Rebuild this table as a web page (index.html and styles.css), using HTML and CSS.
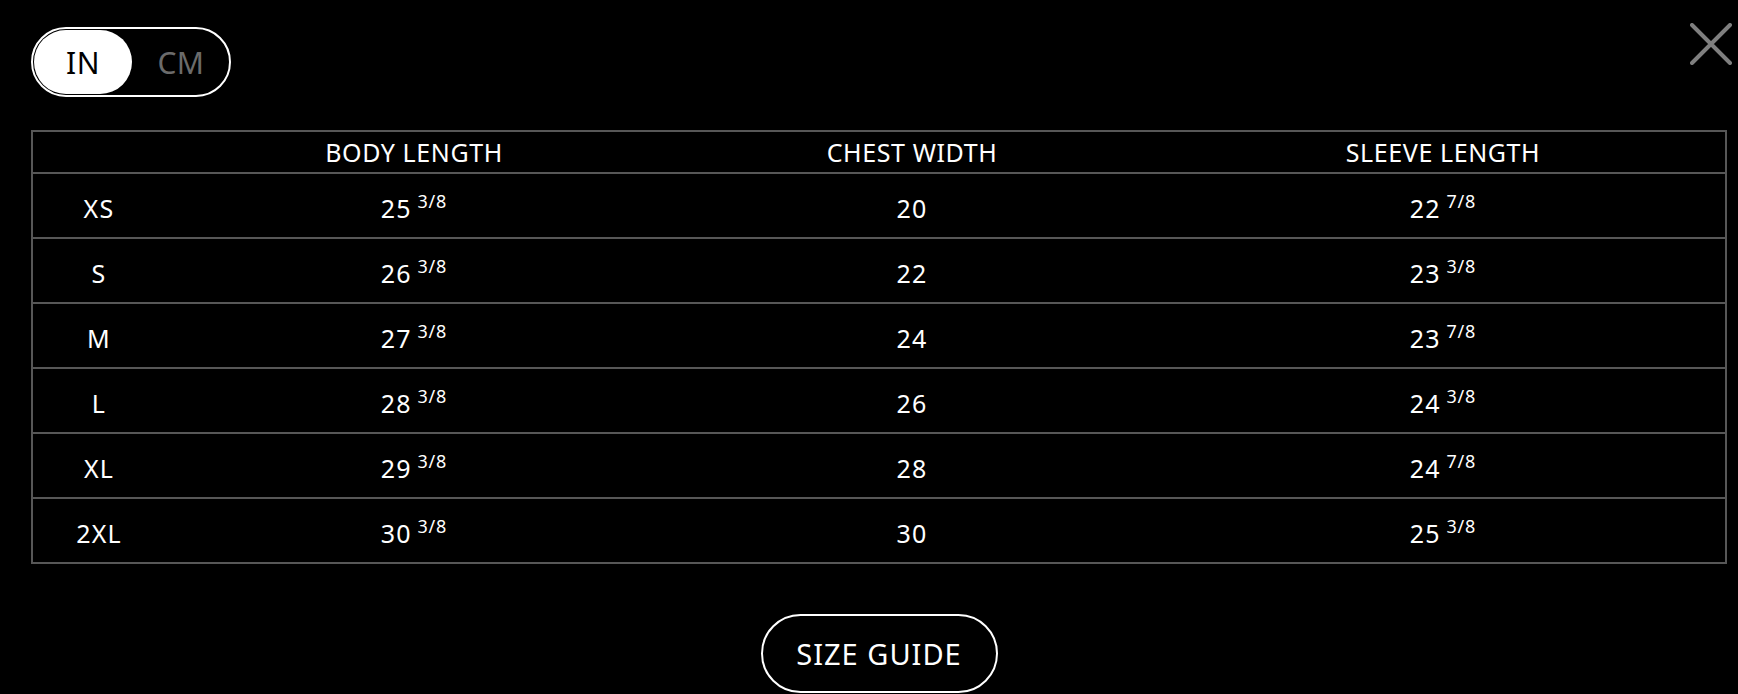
FILE: index.html
```html
<!DOCTYPE html>
<html>
<head>
<meta charset="utf-8">
<link rel="stylesheet" href="styles.css">
</head>
<body>
<div class="modal">
  <div class="topbar">
    <div class="toggle">
      <span class="opt active">IN</span>
      <span class="opt">CM</span>
    </div>
    <button class="close" aria-label="Close">
      <svg width="42" height="42" viewBox="0 0 42 42"><path d="M2 2 L40 40 M40 2 L2 40" stroke="#7f7f7f" stroke-width="4" stroke-linecap="round" fill="none"/></svg>
    </button>
  </div>
  <table class="sizes">
    <colgroup><col class="c0"><col class="c1"><col class="c2"><col class="c3"></colgroup>
    <thead>
      <tr><th></th><th>BODY LENGTH</th><th>CHEST WIDTH</th><th>SLEEVE LENGTH</th></tr>
    </thead>
    <tbody>
      <tr><td>XS</td><td>25 <sup>3/8</sup></td><td>20</td><td>22 <sup>7/8</sup></td></tr>
      <tr><td>S</td><td>26 <sup>3/8</sup></td><td>22</td><td>23 <sup>3/8</sup></td></tr>
      <tr><td>M</td><td>27 <sup>3/8</sup></td><td>24</td><td>23 <sup>7/8</sup></td></tr>
      <tr><td>L</td><td>28 <sup>3/8</sup></td><td>26</td><td>24 <sup>3/8</sup></td></tr>
      <tr><td>XL</td><td>29 <sup>3/8</sup></td><td>28</td><td>24 <sup>7/8</sup></td></tr>
      <tr><td>2XL</td><td>30 <sup>3/8</sup></td><td>30</td><td>25 <sup>3/8</sup></td></tr>
    </tbody>
  </table>
  <div class="footer">
    <button class="guide">SIZE GUIDE</button>
  </div>
</div>
</body>
</html>
```
FILE: styles.css
```css
html, body {
  margin: 0;
  padding: 0;
  background: #000;
  color: #fff;
  font-family: "Noto Sans", "Open Sans", sans-serif;
  height: 100%;
  overflow: hidden;
}
.modal {
  padding: 27px 11px 0 31px;
}
.topbar {
  display: flex;
  justify-content: space-between;
  align-items: flex-start;
  height: 70px;
  margin-bottom: 33px;
}
.toggle {
  display: flex;
  box-sizing: border-box;
  width: 200px;
  height: 70px;
  border: 2px solid #fff;
  border-radius: 35px;
  padding: 1px;
}
.opt {
  flex: 0 0 98px;
  display: flex;
  align-items: center;
  justify-content: center;
  font-size: 30px;
  color: #6b6b6b;
  border-radius: 33px;
  letter-spacing: 0.5px;
}
.opt.active {
  background: #fff;
  color: #000;
}
.close {
  background: none;
  border: 0;
  padding: 0;
  margin: -4px -5px 0 0;
  cursor: pointer;
  line-height: 0;
}
.sizes {
  width: 100%;
  border-collapse: collapse;
  border: 2px solid #575757;
  table-layout: fixed;
}
.c0 { width: 133px; }
.c1 { width: 498px; }
.c2 { width: 498px; }
.sizes th {
  box-sizing: border-box;
  height: 42px;
  font-weight: 400;
  font-size: 25px;
  line-height: 32px;
  letter-spacing: 0.6px;
  text-align: center;
  vertical-align: top;
  padding: 4px 0 0;
  border-bottom: 2px solid #575757;
}
.sizes td {
  box-sizing: border-box;
  height: 65px;
  font-size: 25px;
  line-height: 32px;
  letter-spacing: 1.2px;
  text-align: center;
  vertical-align: top;
  padding: 18px 0 0;
  border-bottom: 2px solid #575757;
}
.sizes sup {
  font-size: 18px;
  letter-spacing: 0.8px;
  vertical-align: 10px;
  line-height: 0;
  margin-left: -2px;
}
.footer {
  display: flex;
  justify-content: center;
  padding-top: 50px;
}
.guide {
  box-sizing: border-box;
  width: 237px;
  height: 79px;
  border: 2px solid #fff;
  border-radius: 40px;
  background: #000;
  color: #fff;
  font-family: inherit;
  font-size: 29px;
  letter-spacing: 1px;
  padding: 0;
}
```
